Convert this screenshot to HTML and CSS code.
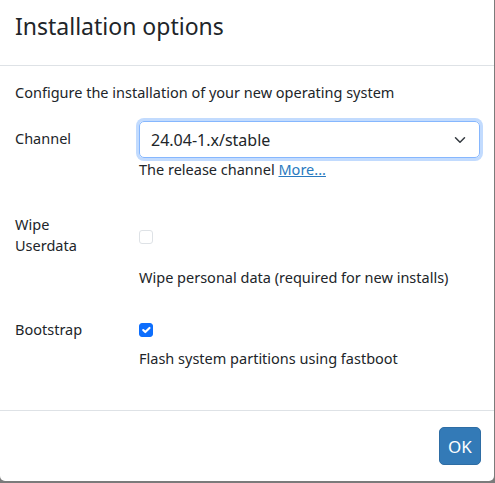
FILE: index.html
```html
<!DOCTYPE html>
<html lang="en">
<head>
<meta charset="utf-8">
<title>Installation options</title>
<link rel="stylesheet" href="styles.css">
</head>
<body>
<div class="modal">
  <div class="modal-header">
    <h5 class="modal-title">Installation options</h5>
  </div>
  <div class="modal-body">
    <p class="intro">Configure the installation of your new operating system</p>
    <div class="row row-channel">
      <label class="label">Channel</label>
      <div class="control">
        <div class="select">
          <span>24.04-1.x/stable</span>
          <svg class="chev" width="12" height="12" viewBox="0 0 16 16"><path d="M2 5l6 6 6-6" fill="none" stroke="#343a40" stroke-width="2" stroke-linecap="round" stroke-linejoin="round"/></svg>
        </div>
        <div class="help">The release channel <a href="#">More...</a></div>
      </div>
    </div>
    <div class="row row-wipe">
      <label class="label">Wipe<br>Userdata</label>
      <div class="control">
        <span class="check"></span>
        <div class="help help-wipe">Wipe personal data (required for new installs)</div>
      </div>
    </div>
    <div class="row row-boot">
      <label class="label">Bootstrap</label>
      <div class="control">
        <span class="check checked"><svg width="14" height="14" viewBox="0 0 20 20"><path d="M6 10l3 3 6-6" fill="none" stroke="#fff" stroke-width="3" stroke-linecap="round" stroke-linejoin="round"/></svg></span>
        <div class="help help-boot">Flash system partitions using fastboot</div>
      </div>
    </div>
  </div>
  <div class="modal-footer">
    <button class="btn">OK</button>
  </div>
</div>
</body>
</html>
```

FILE: styles.css
```css
html, body {
  margin: 0;
  padding: 0;
}
body {
  background: #7b7b7b;
  height: 483px;
  overflow: hidden;
  font-family: "Noto Sans", "Open Sans", sans-serif;
  color: #212529;
  font-size: 14.5px;
}
.modal {
  background: #fff;
  width: 494px;
  height: 481px;
  border-radius: 0 0 5px 5px;
  display: flex;
  flex-direction: column;
}
.modal-header {
  height: 66px;
  border-bottom: 1px solid #dee2e6;
  padding: 0 15px;
  box-sizing: border-box;
}
.modal-title {
  margin: 0;
  padding-top: 10px;
  font-size: 23px;
  font-weight: 400;
  line-height: 32px;
}
.modal-body {
  flex: 1;
  padding: 16px 14px 0 15px;
}
.intro {
  margin: 0 0 18px;
  line-height: 21px;
}
.row {
  display: grid;
  grid-template-columns: 124px 1fr;
}
.label {
  line-height: 21px;
}
.row-channel .label {
  padding-top: 7px;
}
.select {
  height: 35px;
  border: 1px solid #86b7fe;
  border-radius: 5px;
  box-shadow: 0 0 0 3px #c2dbfe;
  display: flex;
  align-items: center;
  justify-content: space-between;
  padding: 0 13px 0 11px;
  font-size: 16px;
}
.chev {
  display: block;
}
.help {
  line-height: 21px;
  margin-top: 1px;
}
.help a {
  color: #2a7ac0;
}
.row-wipe {
  margin-top: 32px;
}
.row-wipe .label {
  padding-top: 2px;
}
.check {
  display: block;
  box-sizing: border-box;
  width: 14px;
  height: 14px;
  border: 1px solid #dee2e6;
  border-radius: 3px;
  margin-top: 18px;
}
.help-wipe {
  margin-top: 23px;
}
.row-boot {
  margin-top: 31px;
}
.row-boot .label {
  padding-top: 0;
}
.check.checked {
  background: #0d6efd;
  border-color: #0d6efd;
  margin-top: 4px;
}
.check.checked svg {
  display: block;
  margin: -1px;
}
.help-boot {
  margin-top: 11px;
}
.modal-footer {
  height: 71px;
  border-top: 1px solid #dee2e6;
  display: flex;
  justify-content: flex-end;
  align-items: flex-start;
  padding: 16px 13px 0 0;
  box-sizing: border-box;
}
.btn {
  width: 42px;
  height: 38px;
  background: #337ab7;
  color: #fff;
  border: 1px solid #2e6da4;
  border-radius: 5px;
  font-family: inherit;
  font-size: 17px;
  padding: 0;
}
```
